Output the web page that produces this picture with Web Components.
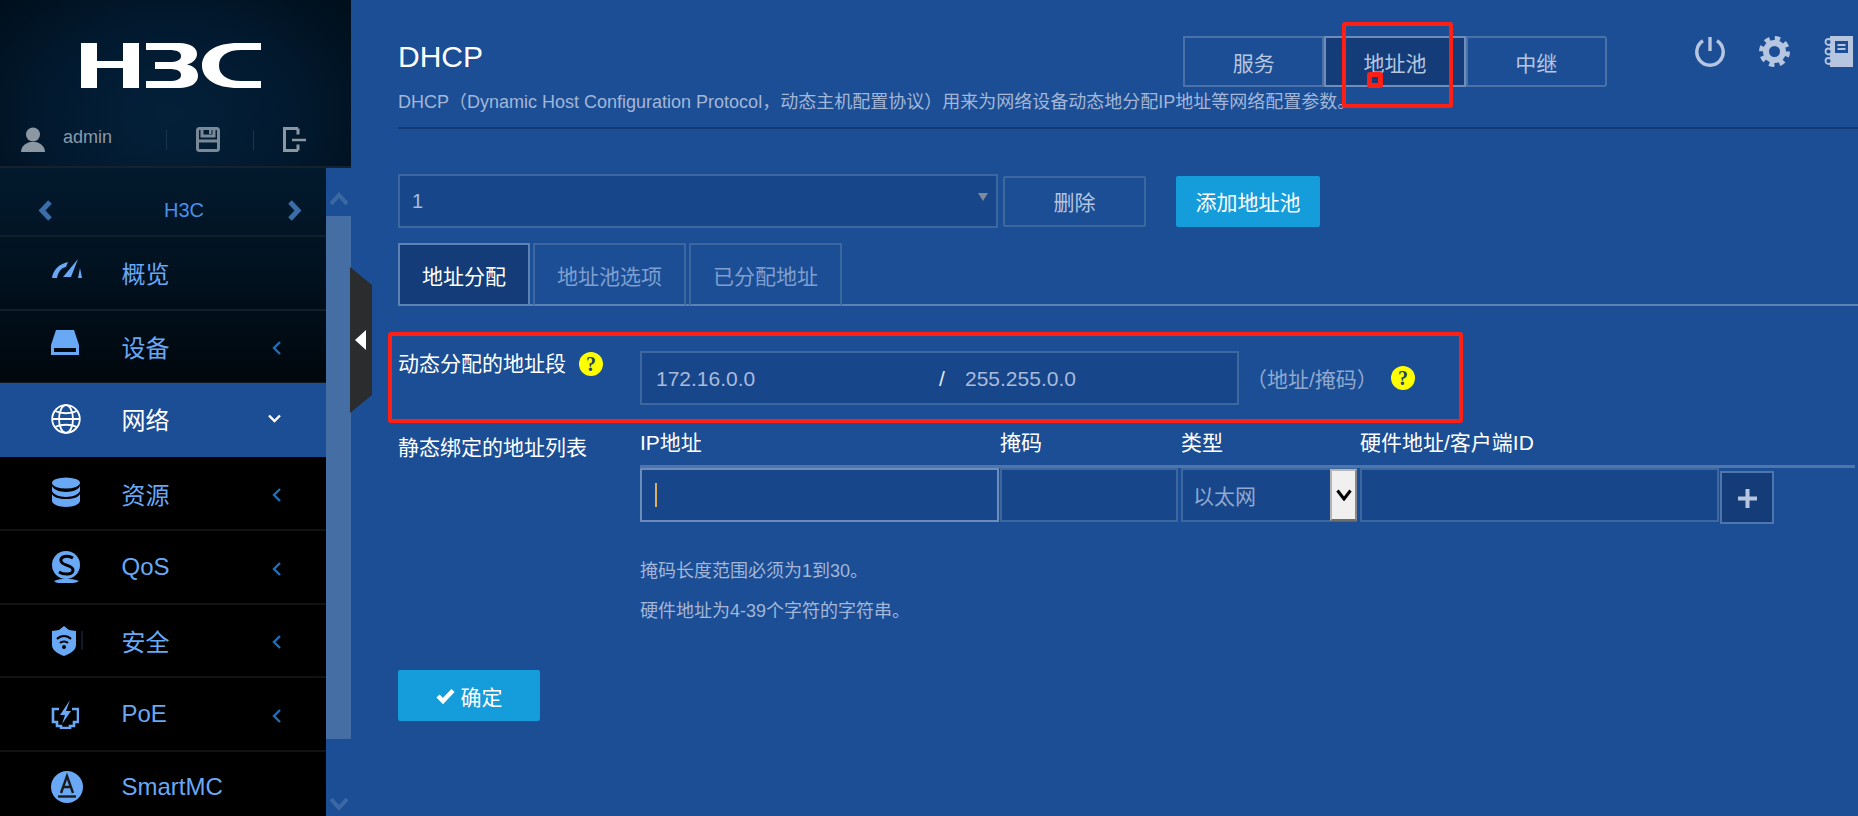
<!DOCTYPE html>
<html lang="zh-CN">
<head>
<meta charset="utf-8">
<title>DHCP</title>
<style>
  html, body { margin: 0; height: 100%; overflow: hidden; background: #1b4e94; }
  body { font-family: "Liberation Sans", "Noto Sans CJK SC", sans-serif; }
</style>
</head>
<body>
<h3c-app>
  <h3c-sidebar slot="side">
    <nav-item label="概览">
      <svg slot="icon" style="margin-top:-8px" width="32" height="20" viewBox="0 0 32 20"><path d="M1 19C2 11 8 5 17 3l-2 5C10 9 7 13 6 19z" fill="currentColor"/><path d="M12 18 27 0l-7 18z" fill="currentColor"/><path d="M29 9l2 10h-4z" fill="currentColor"/></svg>
    </nav-item>
    <nav-item label="设备" arrow="left">
      <svg slot="icon" style="margin-top:-6px" width="28" height="26" viewBox="0 0 28 26"><path fill-rule="evenodd" d="M5 0h18l5 15v10H0V15zM3 18v4h22v-4z" fill="currentColor"/></svg>
    </nav-item>
    <nav-item label="网络" arrow="down" active>
      <svg slot="icon" width="30" height="30" viewBox="0 0 30 30" fill="none" stroke="currentColor" stroke-width="1.8"><circle cx="15" cy="15" r="13.8"/><ellipse cx="15" cy="15" rx="7" ry="13.8"/><path d="M4 7c6 3 16 3 22 0M4 23c6-3 16-3 22 0M1.5 15h27"/></svg>
    </nav-item>
    <nav-item label="资源" arrow="left">
      <svg slot="icon" style="margin-top:-2px" width="30" height="30" viewBox="0 0 30 30" fill="currentColor"><ellipse cx="15" cy="6" rx="14" ry="5.5"/><path d="M1 9c1 3 7 6 14 6s13-3 14-6v5c-1 3-7 6-14 6S2 17 1 14z"/><path d="M1 17c1 3 7 5 14 5s13-2 14-5v7c0 3-7 6-14 6S1 27 1 24z"/></svg>
    </nav-item>
    <nav-item label="QoS" arrow="left">
      <svg slot="icon" width="30" height="32" viewBox="0 0 30 32"><circle cx="15" cy="14" r="14" fill="currentColor"/><path d="M22 7C17 4 9 5 10 10c1 5 12 4 12 9 0 5-9 5-14 2" fill="none" stroke="#000" stroke-width="3"/><path d="M3 30c7-3 17-3 25 0-3 2-6 2-8 2H9c-2 0-4 0-6-2z" fill="currentColor"/></svg>
    </nav-item>
    <nav-item label="安全" arrow="left">
      <svg slot="icon" style="margin-top:2px" width="32" height="30" viewBox="0 0 32 30"><path d="M13 0l5 4 7 1v14c0 6-7 9-12 11C8 28 1 25 1 19V5l7-1z" fill="currentColor"/><path d="M6 13c4-4 10-4 14 0M9 17c2-2 6-2 8 0" fill="none" stroke="#000" stroke-width="2"/><circle cx="13" cy="21" r="2" fill="#000"/><path d="M31 5v19" stroke="#1b3556"/></svg>
    </nav-item>
    <nav-item label="PoE" arrow="left">
      <svg slot="icon" style="margin-top:2px" width="28" height="29" viewBox="0 0 28 29"><path d="M8 9H2v13h4v4h4v2h9v-2h4v-4h4V9h-6" fill="none" stroke="currentColor" stroke-width="2.6"/><path d="M19 0 9 15h5l-3 9 9-13h-5z" fill="currentColor"/></svg>
    </nav-item>
    <nav-item label="SmartMC">
      <svg slot="icon" width="32" height="32" viewBox="0 0 32 32"><circle cx="16" cy="16" r="16" fill="currentColor"/><path d="M10 22 16 5l6 17M12 16h8" fill="none" stroke="#1a1a1a" stroke-width="2.4"/><path d="M7 25.5h18" stroke="#1a1a1a" stroke-width="2.4"/></svg>
    </nav-item>
  </h3c-sidebar>

  <page-head title="DHCP">DHCP（Dynamic Host Configuration Protocol，动态主机配置协议）用来为网络设备动态地分配IP地址等网络配置参数。</page-head>
  <pool-bar value="1"></pool-bar>
  <sub-tabs></sub-tabs>
  <range-row></range-row>
  <static-table></static-table>
  <form-notes></form-notes>
  <ok-button>确定</ok-button>

  <mark-box slot="over" x="991" y="22" w="111" h="86"></mark-box>
  <mark-box slot="over" x="1016" y="72" w="16" h="16" b="5"></mark-box>
  <mark-box slot="over" x="37" y="332" w="1075" h="91"></mark-box>
</h3c-app>

<script>
const PANEL = '#17468a';
const EDGE = '#3c689f';
const SOFT = '#b6c6e0';

class H3cApp extends HTMLElement {
  constructor() {
    super();
    this.attachShadow({ mode: 'open' });
    this.shadowRoot.innerHTML = `
      <style>
        :host { display: flex; width: 1858px; height: 816px; overflow: hidden; position: relative; background: #1b4e94; }
        main { flex: 1; min-width: 0; position: relative; display: flex; flex-direction: column; }
        .handle { position: absolute; left: -1px; top: 267px; width: 22px; height: 146px; }
        .over { position: absolute; left: 0; top: 0; }
      </style>
      <slot name="side"></slot>
      <main>
        <slot></slot>
        <svg class="handle" viewBox="0 0 22 146">
          <path d="M0 0l22 18v110L0 146z" fill="#2a2c2e"/>
          <path d="M5 73l11-10v20z" fill="#fff"/>
        </svg>
        <div class="over"><slot name="over"></slot></div>
      </main>
    `;
  }
}

class H3cSidebar extends HTMLElement {
  constructor() {
    super();
    this.attachShadow({ mode: 'open' });
    this.shadowRoot.innerHTML = `
      <style>
        :host { display: block; width: 351px; height: 816px; flex: none; overflow: hidden; color: #8b98a3; }
        header { height: 166px; border-bottom: 2px solid #17212b; box-sizing: content-box;
          background: radial-gradient(ellipse 230px 170px at 170px 115px, #032039 0%, #021a30 50%, #000f1c 100%); overflow: hidden; }
        .logo { display: block; margin: 43px 0 0 81px; }
        .user { display: flex; align-items: center; margin: 39px 0 0 21px; height: 25px; }
        .user span { font-size: 18px; color: #8a9aa8; margin: 0 0 0 18px; width: 103px; position: relative; top: -2px; }
        .sep { width: 1px; height: 20px; background: #1c3448; }
        .user svg.act { margin: 0 33px 0 29px; }
        .lower { display: flex; height: 648px; }
        nav { width: 326px; background: linear-gradient(#021a2e 0, #010f1b 130px, #000 290px); }
        .top { height: 49px; padding: 18px 24px 0 38px; display: flex; align-items: center; justify-content: space-between;
          border-bottom: 2px solid #12202c; font-size: 20px; color: #4a90e8; }
        .top span { margin-left: 28px; }
        .bar { width: 25px; background: #1b4e94; display: flex; flex-direction: column; align-items: center; }
        .bar .room { height: 48px; display: flex; align-items: flex-start; padding-top: 24px; box-sizing: border-box; }
        .thumb { width: 25px; height: 523px; background: #446ea4; flex: none; }
        .end { flex: 1; display: flex; align-items: flex-end; padding-bottom: 5px; }
      </style>
      <header>
        <svg class="logo" width="180" height="45" viewBox="0 0 180 45" fill="#fff" role="img" aria-label="H3C">
          <path d="M0 0h16v18h26V0h16v45H42V25H16v20H0z"/>
          <path d="M65 0h33c12 0 18 5 18 11 0 5-4 9-10 10.500 7 1.500 11 5.500 11 11.500 0 7-7 12-19 12H65v-7h23c8 0 12-2 12-6s-4-6-12-6H74v-7h14c8 0 12-2 12-6s-4-6-12-6H65z"/>
          <path d="M180 0v7h-20c-14 0-22 6-22 15.500S146 38 160 38h20v7h-23c-22 0-36-9-36-22.500S135 0 157 0z"/>
        </svg>
        <div class="user">
          <svg width="24" height="25" viewBox="0 0 24 25" fill="#8b98a3"><circle cx="12" cy="7.500" r="7"/><path d="M0 25c0-6 5-9 9-10h6c4 1 9 4 9 10z"/></svg>
          <span>admin</span>
          <i class="sep"></i>
          <svg class="act" width="24" height="25" viewBox="0 0 24 25" fill="none" stroke="#7a8997" stroke-width="3"><rect x="1.500" y="1.500" width="21" height="22" rx="2"/><path d="M6 2v7h12V2M3 14h18"/><path d="M13 3h2.500v4H13z" fill="#7a8997" stroke="none"/></svg>
          <i class="sep"></i>
          <svg class="act" style="margin-right:0" width="23" height="25" viewBox="0 0 23 25" fill="none" stroke="#8b98a3" stroke-width="3"><path d="M15 1.500H1.500v22H15M15 1.500v6M15 23.500v-6"/><path d="M9 13h14" stroke-width="2.500"/></svg>
        </div>
      </header>
      <div class="lower">
        <nav>
          <div class="top">
            <svg width="14" height="21" viewBox="0 0 14 21" fill="none" stroke="#3a6ea8" stroke-width="5"><path d="M12 2 4 10.500l8 8.500"/></svg>
            <span>H3C</span>
            <svg width="14" height="21" viewBox="0 0 14 21" fill="none" stroke="#3a6ea8" stroke-width="5"><path d="M2 2l8 8.500L2 19"/></svg>
          </div>
          <slot></slot>
        </nav>
        <div class="bar">
          <div class="room"><svg width="18" height="13" viewBox="0 0 18 13" fill="none" stroke="#3b68a3" stroke-width="4"><path d="M1 12l8-9 8 9"/></svg></div>
          <div class="thumb"></div>
          <div class="end"><svg width="18" height="13" viewBox="0 0 18 13" fill="none" stroke="#3b68a3" stroke-width="4"><path d="M1 1l8 9 8-9"/></svg></div>
        </div>
      </div>
    `;
  }
}

class NavItem extends HTMLElement {
  constructor() {
    super();
    this.attachShadow({ mode: 'open' });
  }

  connectedCallback() {
    const arrow = this.getAttribute('arrow');
    let mark = '';
    if (arrow === 'left') mark = '<svg class="back" width="9" height="14" viewBox="0 0 9 14" fill="none" stroke="#1f6fb8" stroke-width="2.400"><path d="M8 1 2 7l6 6"/></svg>';
    if (arrow === 'down') mark = '<svg width="13" height="9" viewBox="0 0 13 9" fill="none" stroke="#fff" stroke-width="2.400"><path d="M1 1.500l5.500 5.500L12 1.500"/></svg>';
    this.shadowRoot.innerHTML = `
      <style>
        :host { display: flex; align-items: center; box-sizing: border-box; height: 73.5px; padding: 0 45px 0 51px;
          border-bottom: 2px solid rgba(255,255,255,.07); color: #68a8f5; font-size: 24px; }
        :host([active]) { background: #1b4e94; color: #fff; border-bottom-color: #1b4e94; margin: -1px 0 1px; }
        .ico { width: 70.500px; flex: none; display: flex; align-items: center; }
        ::slotted(svg) { display: block; }
        .txt { flex: 1; }
        .back { margin-top: 4px; }
      </style>
      <div class="ico"><slot name="icon"></slot></div>
      <div class="txt">${this.getAttribute('label')}</div>
      ${mark}
    `;
  }
}

class PageHead extends HTMLElement {
  constructor() {
    super();
    this.attachShadow({ mode: 'open' });
  }

  connectedCallback() {
    this.shadowRoot.innerHTML = `
      <style>
        :host { display: block; margin-left: 47px; height: 127px; box-sizing: content-box; padding: 0; border-bottom: 2px solid #153b75; }
        .line { display: flex; padding-top: 36px; }
        h1 { flex: 1; margin: 1px 0 0; font-size: 30px; font-weight: 400; line-height: 40px; color: #fff; }
        .tools { display: flex; gap: 34px; margin: 0 4px 0 88px; align-items: flex-start; }
        .tools svg { display: block; }
        p { margin: 2px 0 0; font-size: 18px; line-height: 26px; color: #a3b6d8; white-space: nowrap; }
      </style>
      <div class="line">
        <h1>${this.getAttribute('title')}</h1>
        <seg-tabs></seg-tabs>
        <div class="tools">
          <svg width="30" height="31" viewBox="0 0 30 31" fill="none" stroke="${SOFT}" stroke-width="3.400"><path d="M8 4.800a13.200 13.200 0 1 0 14 0"/><path d="M15 1v14"/></svg>
          <svg width="31" height="31" viewBox="0 0 31 31" fill="none" stroke="${SOFT}"><circle cx="15.500" cy="15.500" r="8.500" stroke-width="6"/><circle cx="15.500" cy="15.500" r="13" stroke-width="5" stroke-dasharray="5.200 5"/></svg>
          <svg width="30" height="31" viewBox="0 0 30 31"><path d="M6 0h23v31H6z" fill="${SOFT}"/><rect x="11" y="5" width="13" height="12" fill="#1b4e94"/><path d="M13.500 9h8M13.500 13h8" stroke="${SOFT}" stroke-width="1.800"/><g fill="#1b4e94" stroke="${SOFT}" stroke-width="1.800"><circle cx="4.500" cy="6" r="3"/><circle cx="4.500" cy="15.500" r="3"/><circle cx="4.500" cy="25" r="3"/></g></svg>
        </div>
      </div>
      <p><slot></slot></p>
    `;
  }
}

class SegTabs extends HTMLElement {
  constructor() {
    super();
    this.attachShadow({ mode: 'open' });
    this.shadowRoot.innerHTML = `
      <style>
        :host { display: flex; height: 51px; width: 424px; flex: none; font-size: 21px; color: ${SOFT}; }
        div { flex: 1; box-sizing: border-box; display: flex; align-items: center; justify-content: center;
          border: 2px solid #4a71a8; }
        div:first-child { border-radius: 3px 0 0 3px; }
        div:last-child { border-radius: 0 3px 3px 0; }
        .on { background: #143c78; border-color: #6f8db8; }
      </style>
      <div>服务</div><div class="on">地址池</div><div>中继</div>
    `;
  }
}

class PoolBar extends HTMLElement {
  constructor() {
    super();
    this.attachShadow({ mode: 'open' });
  }

  connectedCallback() {
    this.shadowRoot.innerHTML = `
      <style>
        :host { display: flex; align-items: center; margin: 45px 0 0 47px; height: 54px; font-size: 21px; }
        .sel { width: 600px; height: 54px; box-sizing: border-box; background: ${PANEL}; border: 2px solid ${EDGE};
          display: flex; color: #a9bbdb; padding: 0 8px 0 12px; line-height: 50px; font-size: 20px; }
        .sel span { flex: 1; }
        .sel i { width: 0; height: 0; margin-top: 17px; border: 5px solid transparent; border-top: 8px solid #7f8b99; border-bottom: 0; }
        .del, .add { width: 143px; height: 51px; box-sizing: border-box; display: flex; align-items: center; justify-content: center; border-radius: 2px; }
        .del { margin-left: 5px; border: 2px solid ${EDGE}; color: ${SOFT}; }
        .add { margin-left: 30px; width: 144px; background: #149cdb; color: #fff; }
      </style>
      <div class="sel"><span>${this.getAttribute('value')}</span><i></i></div>
      <div class="del">删除</div>
      <div class="add">添加地址池</div>
    `;
  }
}

class SubTabs extends HTMLElement {
  constructor() {
    super();
    this.attachShadow({ mode: 'open' });
    this.shadowRoot.innerHTML = `
      <style>
        :host { display: flex; gap: 3px; margin: 15px 0 0 47px; height: 61px; border-bottom: 2px solid #5d81b3; font-size: 21px; color: #7f9fd0; }
        div { box-sizing: border-box; height: 63px; width: 153px; display: flex; align-items: center; justify-content: center;
          border: 2px solid ${EDGE}; border-bottom-color: #5d81b3; }
        .on { width: 132px; background: #143c78; border-color: #5d81b3; color: #fff; }
      </style>
      <div class="on">地址分配</div><div>地址池选项</div><div>已分配地址</div>
    `;
  }
}

class HelpDot extends HTMLElement {
  constructor() {
    super();
    this.attachShadow({ mode: 'open' });
    this.shadowRoot.innerHTML = `
      <style>
        :host { display: inline-flex; width: 24px; height: 24px; border-radius: 50%; background: #ffff00; flex: none;
          align-items: center; justify-content: center; color: #26406b; font: bold 20px "Liberation Serif", serif; }
      </style>?
    `;
  }
}

class RangeRow extends HTMLElement {
  constructor() {
    super();
    this.attachShadow({ mode: 'open' });
    this.shadowRoot.innerHTML = `
      <style>
        :host { display: flex; margin: 45px 0 0 47px; font-size: 21px; height: 54px; }
        .lab { width: 242px; display: flex; align-items: flex-start; color: #fff; line-height: 24px; padding-top: 1px; }
        .lab help-dot { margin: 0 0 0 13px; }
        .box { width: 599px; box-sizing: border-box; background: ${PANEL}; border: 2px solid ${EDGE}; display: flex; align-items: center;
          padding: 2px 0 0 14px; color: #a9bbdb; }
        .box b { font-weight: 400; width: 283px; }
        .box i { font-style: normal; color: #e6ecf6; width: 26px; }
        .unit { margin-left: 7px; width: 145px; align-self: center; color: #8fa8cf; white-space: nowrap; }
        .tail { align-self: center; margin-top: 0; }
      </style>
      <div class="lab"><span>动态分配的地址段</span><help-dot></help-dot></div>
      <div class="box"><b>172.16.0.0</b><i>/</i><span>255.255.0.0</span></div>
      <div class="unit">（地址/掩码）</div>
      <help-dot class="tail"></help-dot>
    `;
  }
}

class StaticTable extends HTMLElement {
  constructor() {
    super();
    this.attachShadow({ mode: 'open' });
    this.shadowRoot.innerHTML = `
      <style>
        :host { display: flex; margin: 24px 0 0 47px; font-size: 21px; }
        .lab { width: 242px; color: #fff; line-height: 38px; }
        .tb { width: 1215px; }
        .head { display: flex; height: 36px; line-height: 28px; border-bottom: 3px solid #4f76ac; color: #fff; box-sizing: content-box; }
        .cells { display: flex; height: 54px; }
        .c1 { width: 359px; margin-right: 1px; } .c2 { width: 178px; margin-right: 3px; }
        .c3 { width: 176px; margin-right: 3px; } .c4 { width: 359px; margin-right: 1px; }
        .f { box-sizing: border-box; background: ${PANEL}; border: 2px solid ${EDGE}; display: flex; align-items: center; }
        .focus { border-color: #6c8dbc; padding-left: 13px; }
        .focus i { width: 2px; height: 24px; background: #d8b060; }
        .type { padding-left: 10px; color: #8fa8cf; justify-content: space-between; }
        .drop { width: 27px; height: 52px; box-sizing: border-box; margin-right: -2px; background: #f0f0f0; display: flex; align-items: center; justify-content: center;
          border: 2px solid #b5b5b5; border-bottom-color: #6e6e6e; border-right-color: #8a8a8a; }
        .plus { width: 54px; height: 53px; margin-top: 3px; box-sizing: border-box; background: #143c78; border: 2px solid #4f76ac; display: flex; align-items: center; justify-content: center; }
      </style>
      <div class="lab">静态绑定的地址列表</div>
      <div class="tb">
        <div class="head">
          <div class="c1">IP地址</div><div class="c2">掩码</div><div class="c3">类型</div><div>硬件地址/客户端ID</div>
        </div>
        <div class="cells">
          <div class="f focus c1"><i></i></div>
          <div class="f c2"></div>
          <div class="f c3 type"><span>以太网</span>
            <div class="drop"><svg width="16" height="12" viewBox="0 0 16 12" fill="none" stroke="#000" stroke-width="3"><path d="M1.500 1.500 8 10l6.500-8.500"/></svg></div>
          </div>
          <div class="f c4"></div>
          <div class="plus"><svg style="margin-top:2px" width="19" height="19" viewBox="0 0 19 19" fill="${SOFT}"><path d="M7.500 0h4v7.500H19v4h-7.500V19h-4v-7.500H0v-4h7.500z"/></svg></div>
        </div>
      </div>
    `;
  }
}

class FormNotes extends HTMLElement {
  constructor() {
    super();
    this.attachShadow({ mode: 'open' });
    this.shadowRoot.innerHTML = `
      <style>
        :host { display: block; margin: 29px 0 0 289px; font-size: 18px; line-height: 40px; color: #a3b6d8; }
      </style>
      <div>掩码长度范围必须为1到30。</div>
      <div>硬件地址为4-39个字符的字符串。</div>
    `;
  }
}

class OkButton extends HTMLElement {
  constructor() {
    super();
    this.attachShadow({ mode: 'open' });
    this.shadowRoot.innerHTML = `
      <style>
        :host { display: flex; align-items: center; justify-content: center; gap: 6px; width: 142px; height: 51px; margin: 39px 0 0 47px;
          background: #149cdb; border-radius: 2px; color: #fff; font-size: 21px; }
      </style>
      <svg width="19" height="16" viewBox="0 0 19 16" fill="none" stroke="#fff" stroke-width="4.500"><path d="M2 8l5 5L17 2.500"/></svg>
      <slot></slot>
    `;
  }
}

class MarkBox extends HTMLElement {
  constructor() {
    super();
    this.attachShadow({ mode: 'open' });
  }

  connectedCallback() {
    const a = (n) => this.getAttribute(n);
    this.shadowRoot.innerHTML = `
      <style>
        :host { display: block; position: absolute; box-sizing: border-box; left: ${a('x')}px; top: ${a('y')}px; width: ${a('w')}px; height: ${a('h')}px;
          border: ${a('b') || 4}px solid #ff2015; border-radius: 3px; }
      </style>
    `;
  }
}

customElements.define('h3c-app', H3cApp);
customElements.define('h3c-sidebar', H3cSidebar);
customElements.define('nav-item', NavItem);
customElements.define('page-head', PageHead);
customElements.define('seg-tabs', SegTabs);
customElements.define('pool-bar', PoolBar);
customElements.define('sub-tabs', SubTabs);
customElements.define('help-dot', HelpDot);
customElements.define('range-row', RangeRow);
customElements.define('static-table', StaticTable);
customElements.define('form-notes', FormNotes);
customElements.define('ok-button', OkButton);
customElements.define('mark-box', MarkBox);
</script>
</body>
</html>
